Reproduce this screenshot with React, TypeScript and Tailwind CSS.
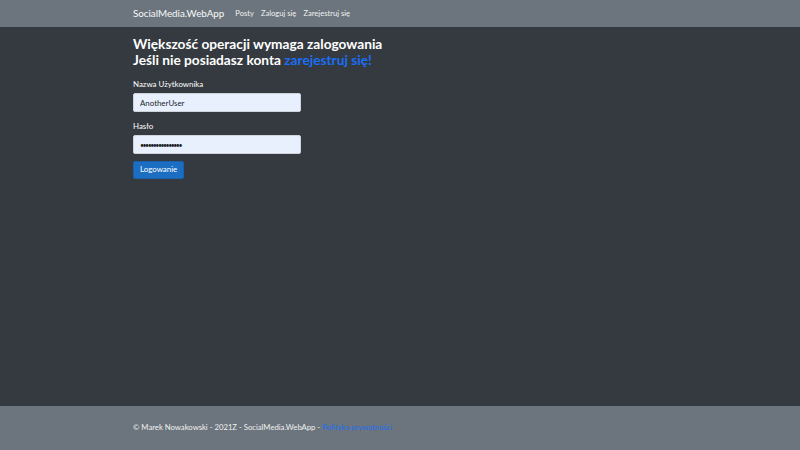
import React from 'react';

const font = { fontFamily: 'Lato, "Noto Sans", sans-serif' };

export default function App() {
  return (
    <div className="flex h-[450px] w-[800px] flex-col bg-[#343a40] text-white" style={font}>
      <nav className="flex h-[27px] shrink-0 items-center bg-[#6c757d] pl-[133px]">
        <span className="text-[9.8px] text-[#f8f9fa]">SocialMedia.WebApp</span>
        <div className="ml-[11px] flex gap-[7px] text-[7.6px] text-[#f1f1f1]">
          <span>Posty</span>
          <span>Zaloguj się</span>
          <span>Zarejestruj się</span>
        </div>
      </nav>

      <main className="flex-1 pl-[133px] pt-[9px]">
        <h1 className="text-[13.7px] font-bold leading-[16px]">
          Większość operacji wymaga zalogowania
          <br />
          Jeśli nie posiadasz konta <span className="text-[#1b6ef3]">zarejestruj się!</span>
        </h1>

        <form className="mt-[11px] w-[168px]">
          <label className="block text-[7.9px] leading-[10px]">Nazwa Użytkownika</label>
          <input
            readOnly
            value="AnotherUser"
            className="mt-[4px] block h-[19px] w-full rounded-[2px] border border-[#ced4da] bg-[#e8f0fe] px-[6px] text-[7.9px] text-[#212529] outline-none"
          />
          <label className="mt-[9px] block text-[7.9px] leading-[10px]">Hasło</label>
          <input
            readOnly
            value="••••••••••••••••"
            className="mt-[4px] block h-[19px] w-full rounded-[2px] border border-[#ced4da] bg-[#e8f0fe] px-[6px] text-[7px] tracking-[-1.5px] text-[#212529] outline-none"
          />
          <button
            type="button"
            className="mt-[7px] h-[18px] rounded-[2px] border border-[#1861ac] bg-[#1b6ec2] px-[6px] text-[7.9px] text-white"
          >
            Logowanie
          </button>
        </form>
      </main>

      <footer className="flex h-[44px] shrink-0 items-center bg-[#6c757d] pl-[133px] text-[7.7px] text-[#f1f1f1]">
        <span>
          © Marek Nowakowski - 2021Z - SocialMedia.WebApp - <span className="text-[#1b6ef3]">Polityka prywatności</span>
        </span>
      </footer>
    </div>
  );
}
